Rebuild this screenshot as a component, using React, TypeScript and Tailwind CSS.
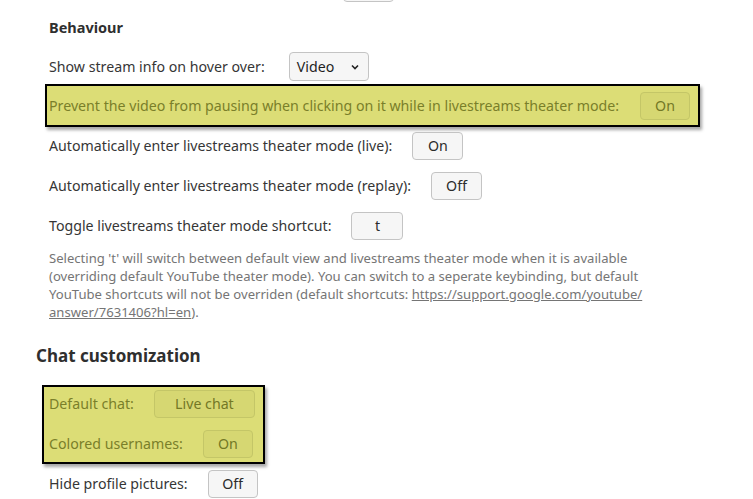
import React from "react";

const font = { fontFamily: '"Noto Sans", "Open Sans", sans-serif' };

function Btn({ children, w, hl }: { children: React.ReactNode; w: string; hl?: boolean }) {
  return (
    <div
      className={
        "h-[28px] flex items-center justify-center rounded-[4px] border text-[14.2px] " +
        w +
        (hl
          ? " bg-[#d6d772] border-[#c4c667] text-[#737826]"
          : " bg-[#f6f6f6] border-[#c4c4c4] text-[#2b2b2b]")
      }
    >
      {children}
    </div>
  );
}

function Row({ label, children, className = "" }: { label: string; children: React.ReactNode; className?: string }) {
  return (
    <div className={"flex items-center gap-5 " + className}>
      <span>{label}</span>
      {children}
    </div>
  );
}

export default function App() {
  return (
    <div
      className="w-[753px] h-[499px] overflow-hidden bg-white text-[14.2px] text-[#363636] relative"
      style={font}
    >
      <div className="flex flex-col">
        {/* cut-off button at top */}
        <div className="ml-[343px] mt-[-26px] w-[51px] h-[28px] rounded-[4px] border border-[#c4c4c4] bg-[#f6f6f6]" />

        <div className="ml-[49px] mt-[15px] font-bold text-[14.5px] leading-[20px] text-[#2f2f2f]">Behaviour</div>

        <div className="ml-[49px] mt-[15px] flex items-center gap-[24px]">
          <span>Show stream info on hover over:</span>
          <div className="w-[80px] h-[29px] rounded-[4px] border border-[#c4c4c4] bg-[#f6f6f6] flex items-center justify-between pl-[7px] pr-[8px] text-[#1f1f1f]">
            <span>Video</span>
            <svg width="10" height="10" viewBox="0 0 10 10" fill="none" stroke="#222" strokeWidth="1.6">
              <path d="M2 3.5 L5 6.5 L8 3.5" />
            </svg>
          </div>
        </div>

        {/* highlighted row */}
        <div className="ml-[45px] mt-[3px] w-[655px] h-[43px] border-2 border-black bg-[#dcdd76] shadow-[2px_3px_3px_rgba(0,0,0,0.35)] flex items-center justify-between pl-[2px] pr-[8px] text-[#7a7f2a]">
          <span>Prevent the video from pausing when clicking on it while in livestreams theater mode:</span>
          <Btn w="w-[50px]" hl>
            On
          </Btn>
        </div>

        <Row label="Automatically enter livestreams theater mode (live):" className="ml-[49px] mt-[5px]">
          <Btn w="w-[51px]">On</Btn>
        </Row>
        <Row label="Automatically enter livestreams theater mode (replay):" className="ml-[49px] mt-[12px]">
          <Btn w="w-[51px]">Off</Btn>
        </Row>
        <Row label="Toggle livestreams theater mode shortcut:" className="ml-[49px] mt-[12px]">
          <Btn w="w-[52px]">t</Btn>
        </Row>

        <p className="ml-[49px] mt-[9px] w-[610px] text-[13.1px] leading-[18px] text-[#757575]">
          Selecting 't' will switch between default view and livestreams theater mode when it is available
          <br />
          (overriding default YouTube theater mode). You can switch to a seperate keybinding, but default
          <br />
          YouTube shortcuts will not be overriden (default shortcuts:{" "}
          <span className="underline">https://support.google.com/youtube/</span>
          <br />
          <span className="underline">answer/7631406?hl=en</span>).
        </p>

        <div className="ml-[36px] mt-[24px] font-bold text-[17px] leading-[22px] text-[#2f2f2f]">Chat customization</div>

        <div className="ml-[42px] mt-[18px] w-[223px] h-[79px] border-2 border-black bg-[#dcdd76] shadow-[2px_3px_3px_rgba(0,0,0,0.35)] flex flex-col gap-[12px] pl-[5px] pt-[3px] text-[#7a7f2a]">
          <div className="flex items-center gap-5">
            <span>Default chat:</span>
            <Btn w="w-[101px]" hl>
              Live chat
            </Btn>
          </div>
          <div className="flex items-center gap-5">
            <span>Colored usernames:</span>
            <Btn w="w-[50px]" hl>
              On
            </Btn>
          </div>
        </div>

        <Row label="Hide profile pictures:" className="ml-[49px] mt-[6px]">
          <Btn w="w-[50px]">Off</Btn>
        </Row>
      </div>
    </div>
  );
}
